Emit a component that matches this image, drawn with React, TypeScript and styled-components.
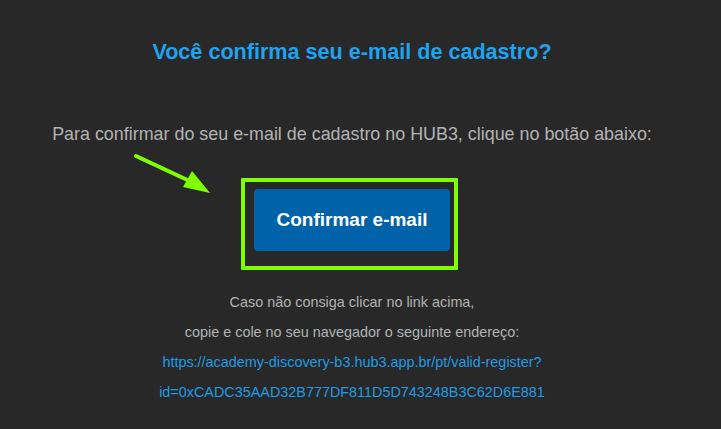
import React from 'react';
import styled, { createGlobalStyle } from 'styled-components';

const GlobalStyle = createGlobalStyle`
  html, body {
    margin: 0;
    padding: 0;
    background: #282828;
  }
  body {
    font-family: 'Liberation Sans', Arial, sans-serif;
  }
`;

const Page = styled.div`
  width: 704px;
  min-height: 429px;
  text-align: center;
  padding-top: 40px;
  box-sizing: border-box;
`;

const Title = styled.h1`
  margin: 0;
  font-size: 21.6px;
  font-weight: 700;
  line-height: 24px;
  color: #1fa3f0;
`;

const Intro = styled.p`
  margin: 59px 0 0;
  font-size: 17.9px;
  line-height: 22px;
  color: #b3b3b3;
`;

const ButtonRow = styled.div`
  position: relative;
  margin-top: 44px;
  display: flex;
  justify-content: center;
`;

const ConfirmButton = styled.a`
  position: relative;
  display: flex;
  align-items: center;
  justify-content: center;
  width: 196px;
  height: 62px;
  border-radius: 4px;
  background: #0062a8;
  color: #ffffff;
  font-size: 19px;
  font-weight: 700;
  text-decoration: none;
`;

const Highlight = styled.span`
  position: absolute;
  left: -13px;
  right: -8px;
  top: -11px;
  bottom: -19px;
  border: 4px solid #7fff00;
  border-radius: 1px;
  pointer-events: none;
`;

const Arrow = styled.svg`
  position: absolute;
  left: 130px;
  top: -38px;
`;

const Notes = styled.div`
  margin-top: 36px;
  display: flex;
  flex-direction: column;
`;

const NoteLine = styled.div<{ $link?: boolean }>`
  font-size: 14.4px;
  line-height: 30px;
  color: ${(p) => (p.$link ? '#1e9be6' : '#b3b3b3')};
`;

export default function App() {
  return (
    <>
      <GlobalStyle />
      <Page>
        <Title>Você confirma seu e-mail de cadastro?</Title>
        <Intro>Para confirmar do seu e-mail de cadastro no HUB3, clique no botão abaixo:</Intro>
        <ButtonRow>
          <Arrow width="90" height="50" viewBox="0 0 90 50">
            <line x1="6" y1="5" x2="66" y2="33" stroke="#7fff00" strokeWidth="4" strokeLinecap="round" />
            <polygon points="80,42 53,36 62,20" fill="#7fff00" />
          </Arrow>
          <ConfirmButton>
            Confirmar e-mail
            <Highlight />
          </ConfirmButton>
        </ButtonRow>
        <Notes>
          <NoteLine>Caso não consiga clicar no link acima,</NoteLine>
          <NoteLine>copie e cole no seu navegador o seguinte endereço:</NoteLine>
          <NoteLine $link>https://academy-discovery-b3.hub3.app.br/pt/valid-register?</NoteLine>
          <NoteLine $link>id=0xCADC35AAD32B777DF811D5D743248B3C62D6E881</NoteLine>
        </Notes>
      </Page>
    </>
  );
}
